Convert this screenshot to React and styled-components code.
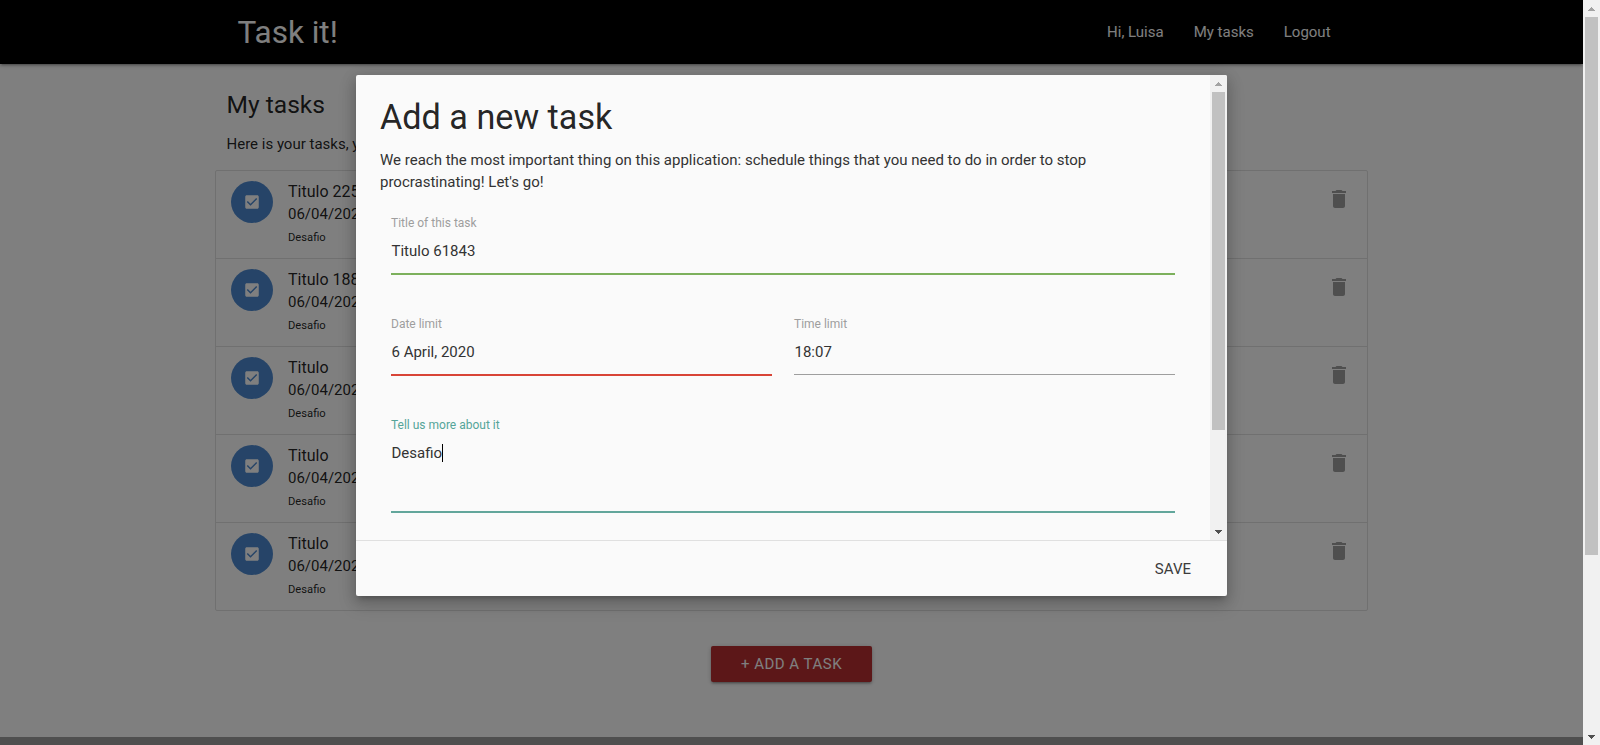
import React from "react";
import styled, { createGlobalStyle } from "styled-components";

const GlobalStyle = createGlobalStyle`
  * { box-sizing: border-box; }
  html, body { margin: 0; padding: 0; }
  body {
    font-family: Roboto, "Liberation Sans", sans-serif;
    font-size: 15px;
    line-height: 1.5;
    color: rgba(0, 0, 0, 0.87);
    background: #fff;
    overflow: hidden;
  }
  h1, h2, p { margin: 0; font-weight: 400; }
  button { font-family: inherit; border: 0; cursor: pointer; }
`;

const Window = styled.div`
  display: flex;
  width: 100vw;
  height: 745px;
`;

const Viewport = styled.div`
  position: relative;
  flex: 1;
  min-width: 0;
  height: 100%;
  overflow: hidden;
`;

const Page = styled.div`
  display: flex;
  flex-direction: column;
  height: 100%;
`;

const NavBar = styled.nav`
  flex: none;
  height: 64px;
  background: #000;
  color: #fff;
  box-shadow: 0 2px 2px 0 rgba(0, 0, 0, 0.14), 0 3px 1px -2px rgba(0, 0, 0, 0.12), 0 1px 5px 0 rgba(0, 0, 0, 0.2);
`;

const NavInner = styled.div`
  display: flex;
  align-items: center;
  justify-content: space-between;
  width: 70%;
  height: 100%;
  margin: 0 auto;
`;

const Logo = styled.a`
  padding-top: 2px;
  font-size: 31.5px;
`;

const NavLinks = styled.div`
  display: flex;
`;

const NavLink = styled.a`
  padding: 0 15px;
  font-weight: 400;
`;

const Main = styled.main`
  flex: 1;
  display: flex;
  flex-direction: column;
  align-items: center;
  padding-top: 27px;
`;

const Content = styled.div`
  width: 1153px;
`;

const PageTitle = styled.h1`
  padding-left: 11.5px;
  font-size: 24.6px;
  line-height: 27px;
`;

const PageText = styled.p`
  padding: 15px 0 0 11.5px;
  height: 52px;
`;

const TaskList = styled.ul`
  margin: 0;
  padding: 0;
  list-style: none;
  border: 1px solid #e0e0e0;
  border-radius: 2px;
`;

const TaskItem = styled.li`
  display: flex;
  align-items: flex-start;
  height: 88px;
  padding: 10px 16px 0 15px;
  border-bottom: 1px solid #e0e0e0;
  &:last-child { height: 87px; border-bottom: 0; }
`;

const Avatar = styled.div`
  display: flex;
  align-items: center;
  justify-content: center;
  width: 42px;
  height: 42px;
  margin-right: 15px;
  border-radius: 50%;
  background: #4c89d0;
  color: #fff;
`;

const TaskBody = styled.div`
  flex: 1;
  line-height: 22.5px;
`;

const TaskTitle = styled.div`
  font-size: 16px;
  line-height: 22px;
`;

const TaskDate = styled.div`
  font-size: 15px;
`;

const TaskNote = styled.div`
  padding-top: 1px;
  font-size: 11.2px;
`;

const Trash = styled.div`
  display: flex;
  padding-top: 6px;
  color: #9e9e9e;
`;

const AddButton = styled.button`
  width: 161px;
  height: 36px;
  margin-top: 35px;
  padding: 0;
  border-radius: 2px;
  background: #b82e30;
  color: #fff;
  font-size: 15px;
  letter-spacing: 0.5px;
  box-shadow: 0 2px 2px 0 rgba(0, 0, 0, 0.14), 0 3px 1px -2px rgba(0, 0, 0, 0.12), 0 1px 5px 0 rgba(0, 0, 0, 0.2);
`;

const PageFooter = styled.footer`
  flex: none;
  height: 8px;
  background: #9e9e9e;
`;

const Overlay = styled.div`
  position: absolute;
  inset: 0;
  background: rgba(0, 0, 0, 0.5);
`;

const Modal = styled.section`
  position: absolute;
  top: 75px;
  left: 356px;
  display: flex;
  flex-direction: column;
  width: 871px;
  height: 521px;
  border-radius: 2px;
  background: #fafafa;
  box-shadow: 0 8px 17px 2px rgba(0, 0, 0, 0.14), 0 3px 14px 2px rgba(0, 0, 0, 0.12), 0 5px 5px -3px rgba(0, 0, 0, 0.2);
`;

const ModalScroll = styled.div`
  display: flex;
  flex: 1;
  min-height: 0;
  overflow: hidden;
  border-radius: 2px 2px 0 0;
`;

const ModalContent = styled.div`
  flex: 1;
  padding: 24px 24px 0;
`;

const ModalTitle = styled.h2`
  font-size: 34.2px;
  line-height: 37px;
`;

const ModalText = styled.p`
  height: 67px;
  margin: 13px 0 1px;
  line-height: 22px;
  color: #333;
`;

const Form = styled.form`
  display: flex;
  flex-direction: column;
  gap: 43px;
  padding: 0 11px;
`;

const FormRow = styled.div`
  display: flex;
  gap: 22px;
`;

const FieldBox = styled.div`
  flex: 1;
`;

const Label = styled.div`
  height: 12px;
  font-size: 12px;
  line-height: 12px;
  color: ${(p) => (p.$active ? "#55a599" : "#9e9e9e")};
`;

const Line = styled.div`
  height: ${(p) => (p.$thin ? 1 : 2)}px;
  margin-bottom: ${(p) => (p.$thin ? 1 : 0)}px;
  background: ${(p) => p.$color};
`;

const Value = styled.div`
  display: flex;
  height: ${(p) => (p.$tall ? 80 : 44)}px;
  padding: 11px 0 0 0.5px;
  font-size: 15px;
  line-height: 22px;
  color: #333;
`;

const Caret = styled.span`
  width: 1px;
  height: 18px;
  margin-top: 2px;
  background: #000;
`;

const ModalFooter = styled.footer`
  display: flex;
  align-items: center;
  justify-content: flex-end;
  height: 56px;
  padding-right: 36px;
  border-top: 1px solid #e0e0e0;
`;

const SaveButton = styled.button`
  padding: 0;
  background: none;
  color: #3c3c3c;
  font-size: 15px;
`;

const Track = styled.div`
  display: flex;
  flex: none;
  flex-direction: column;
  align-items: center;
  width: 17px;
  height: 100%;
  background: #f1f1f1;
`;

const ArrowBox = styled.div`
  display: flex;
  width: 17px;
  height: 17px;
`;

const Thumb = styled.div`
  width: 13px;
  height: ${(p) => p.$size}px;
  margin-bottom: auto;
  background: #c1c1c1;
`;

function ScrollBar({ size }) {
  return (
    <Track>
      <ArrowBox>
        <svg width="17" height="17" shapeRendering="crispEdges" fill="#a3a3a3">
          <path d="M8 7h1v1h1v1h1v1h1v1H5v-1h1V9h1V8h1z" />
        </svg>
      </ArrowBox>
      <Thumb $size={size} />
      <ArrowBox>
        <svg width="17" height="17" shapeRendering="crispEdges" fill="#505050">
          <path d="M5 7h7v1h-1v1h-1v1H9v1H8v-1H7V9H6V8H5z" />
        </svg>
      </ArrowBox>
    </Track>
  );
}

function Field({ label, value, color, thin, tall, active }) {
  return (
    <FieldBox>
      <Label $active={active}>{label}</Label>
      <Value $tall={tall}>
        {value}
        {active && <Caret />}
      </Value>
      <Line $color={color} $thin={thin} />
    </FieldBox>
  );
}

const tasks = ["Titulo 22550", "Titulo 18820", "Titulo", "Titulo", "Titulo"];

export default function App() {
  return (
    <Window>
      <GlobalStyle />
      <Viewport>
        <Page>
          <NavBar>
            <NavInner>
              <Logo>Task it!</Logo>
              <NavLinks>
                <NavLink>Hi, Luisa</NavLink>
                <NavLink>My tasks</NavLink>
                <NavLink>Logout</NavLink>
              </NavLinks>
            </NavInner>
          </NavBar>
          <Main>
            <Content>
              <PageTitle>My tasks</PageTitle>
              <PageText>Here is your tasks, y</PageText>
              <TaskList>
                {tasks.map((title, i) => (
                  <TaskItem key={i}>
                    <Avatar>
                      <svg width="18" height="18" viewBox="0 0 24 24" fill="currentColor">
                        <path d="M19 3H5c-1.11 0-2 .9-2 2v14c0 1.1.89 2 2 2h14c1.11 0 2-.9 2-2V5c0-1.1-.89-2-2-2zm-9 14l-5-5 1.41-1.41L10 14.17l7.59-7.59L19 8l-9 9z" />
                      </svg>
                    </Avatar>
                    <TaskBody>
                      <TaskTitle>{title}</TaskTitle>
                      <TaskDate>06/04/2020</TaskDate>
                      <TaskNote>Desafio</TaskNote>
                    </TaskBody>
                    <Trash>
                      <svg width="24" height="24" viewBox="0 0 24 24" fill="currentColor">
                        <path d="M6 19c0 1.1.9 2 2 2h8c1.1 0 2-.9 2-2V7H6v12zM19 4h-3.5l-1-1h-5l-1 1H5v2h14V4z" />
                      </svg>
                    </Trash>
                  </TaskItem>
                ))}
              </TaskList>
            </Content>
            <AddButton>+ ADD A TASK</AddButton>
          </Main>
          <PageFooter />
        </Page>
        <Overlay />
        <Modal>
          <ModalScroll>
            <ModalContent>
              <ModalTitle>Add a new task</ModalTitle>
              <ModalText>
                We reach the most important thing on this application: schedule things that you need to do in order to stop
                <br />
                procrastinating! Let's go!
              </ModalText>
              <Form>
                <Field label="Title of this task" value="Titulo 61843" color="#7cb05c" />
                <FormRow>
                  <Field label="Date limit" value="6 April, 2020" color="#d84437" />
                  <Field label="Time limit" value="18:07" color="#9e9e9e" thin />
                </FormRow>
                <Field label="Tell us more about it" value="Desafio" color="#62a69b" tall active />
              </Form>
            </ModalContent>
            <ScrollBar size={338} />
          </ModalScroll>
          <ModalFooter>
            <SaveButton>SAVE</SaveButton>
          </ModalFooter>
        </Modal>
      </Viewport>
      <ScrollBar size={538} />
    </Window>
  );
}
